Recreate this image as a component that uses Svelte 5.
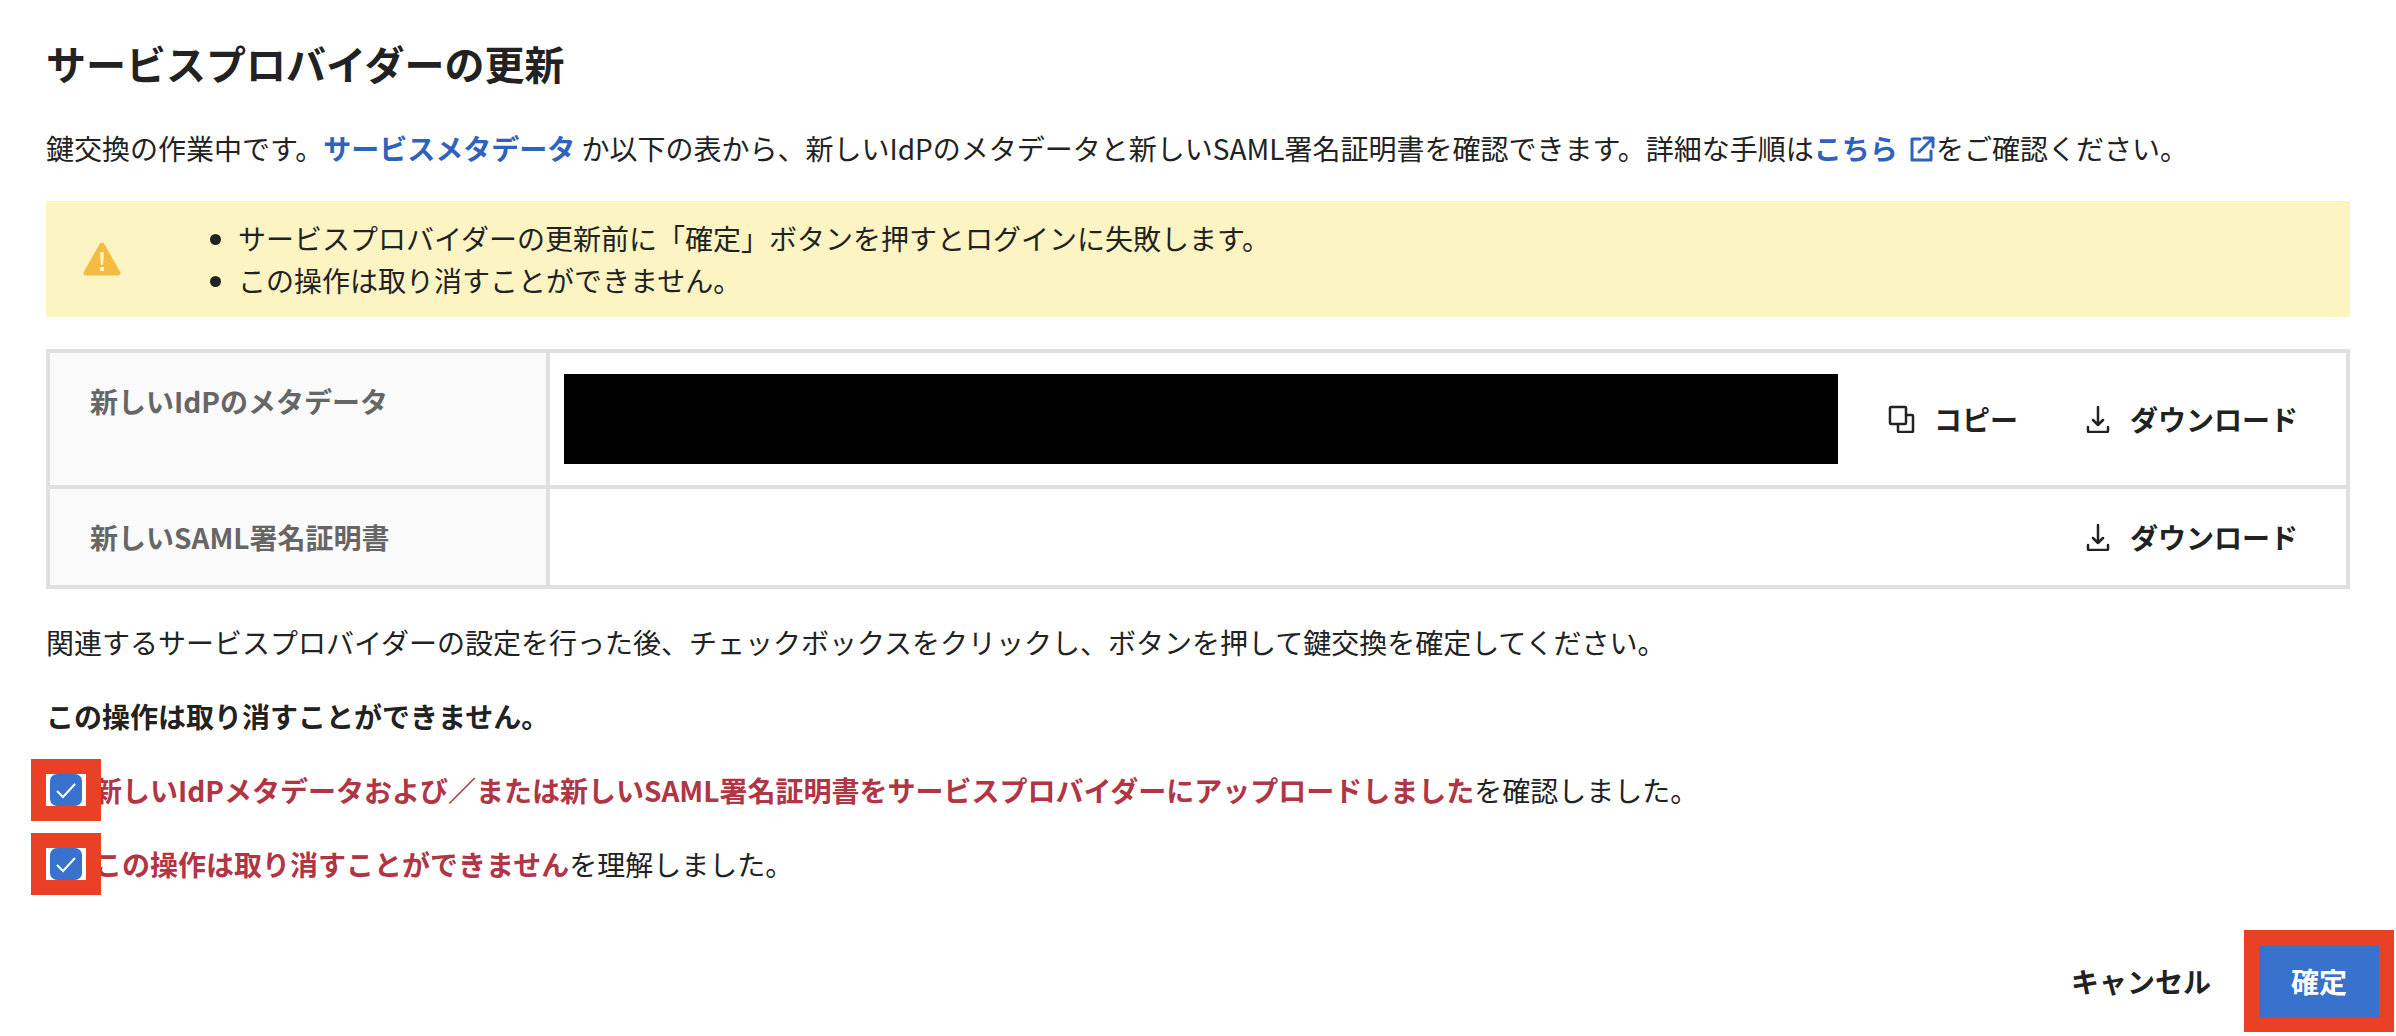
<script>
	let uploaded = true;
	let understood = true;
</script>

<svelte:head>
	<title>サービスプロバイダーの更新</title>
</svelte:head>

<main class="dialog">
	<div class="content">
		<h1>サービスプロバイダーの更新</h1>

		<p>
			鍵交換の作業中です。<a href="#metadata">サービスメタデータ</a> か以下の表から、新しいIdPのメタデータと新しいSAML署名証明書を確認できます。詳細な手順は<a href="#guide">こちら
				<svg class="external" viewBox="0 0 28 28" aria-hidden="true">
					<path d="M12 4H4v21h19v-9M16 3h9v9M24 4 11 17" />
				</svg></a>をご確認ください。
		</p>

		<div class="alert">
			<svg class="warning" viewBox="0 0 40 36" aria-hidden="true">
				<path class="triangle" d="M20 4 36 32H4Z" />
				<path class="mark" d="M18 11h4l-1 13h-2zM18 26h4v4h-4z" />
			</svg>
			<ul>
				<li>サービスプロバイダーの更新前に「確定」ボタンを押すとログインに失敗します。</li>
				<li>この操作は取り消すことができません。</li>
			</ul>
		</div>

		<table>
			<tbody>
				<tr>
					<th scope="row">新しいIdPのメタデータ</th>
					<td>
						<div class="cell">
							<div class="redacted"></div>
							<button type="button" class="action">
								<svg viewBox="0 0 28 28" aria-hidden="true">
									<rect x="2" y="2" width="16" height="17" rx="1" />
									<path d="M18 10h6q1 0 1 1v15q0 1-1 1H11q-1 0-1-1v-7" />
								</svg>
								コピー
							</button>
							<button type="button" class="action">
								<svg viewBox="0 0 28 28" aria-hidden="true">
									<path d="M14 2v18M9 15l5 5 5-5M4 22v4q0 1 1 1h18q1 0 1-1v-4" />
								</svg>
								ダウンロード
							</button>
						</div>
					</td>
				</tr>
				<tr>
					<th scope="row">新しいSAML署名証明書</th>
					<td>
						<div class="cell">
							<button type="button" class="action">
								<svg viewBox="0 0 28 28" aria-hidden="true">
									<path d="M14 2v18M9 15l5 5 5-5M4 22v4q0 1 1 1h18q1 0 1-1v-4" />
								</svg>
								ダウンロード
							</button>
						</div>
					</td>
				</tr>
			</tbody>
		</table>

		<p>関連するサービスプロバイダーの設定を行った後、チェックボックスをクリックし、ボタンを押して鍵交換を確定してください。</p>
		<p><strong>この操作は取り消すことができません。</strong></p>

		<label>
			<span class="check highlight">
				<input type="checkbox" bind:checked={uploaded} />
			</span>
			<span><strong class="danger">新しいIdPメタデータおよび／または新しいSAML署名証明書をサービスプロバイダーにアップロードしました</strong>を確認しました。</span>
		</label>
		<label>
			<span class="check highlight">
				<input type="checkbox" bind:checked={understood} />
			</span>
			<span><strong class="danger">この操作は取り消すことができません</strong>を理解しました。</span>
		</label>
	</div>

	<footer>
		<button type="button" class="cancel">キャンセル</button>
		<button type="button" class="confirm highlight" disabled={!uploaded || !understood}>確定</button>
	</footer>
</main>

<style>
	:global(body) {
		background: #fff;
	}
	.dialog {
		font-family: "Noto Sans CJK JP", sans-serif;
		font-size: 28px;
		line-height: 42px;
		color: #222;
	}
	.content {
		display: flex;
		flex-direction: column;
		gap: 32px;
		padding: 31px 46px 0;
	}
	h1 {
		margin: 0;
		font-size: 40px;
		font-weight: 700;
		line-height: 64px;
	}
	p {
		margin: 0;
	}
	a {
		color: #2e62bd;
		font-weight: 700;
		text-decoration: none;
	}
	strong {
		font-weight: 700;
	}
	svg {
		fill: none;
		stroke: currentColor;
		stroke-width: 2.5;
		stroke-linecap: round;
		stroke-linejoin: round;
	}
	.external {
		width: 28px;
		height: 28px;
		margin-left: 4px;
		vertical-align: -3px;
		stroke-width: 3;
	}

	.alert {
		display: flex;
		align-items: center;
		padding: 16px 36px;
		background: #fdf4c4;
	}
	.warning {
		width: 40px;
		height: 36px;
	}
	.triangle {
		fill: #f5bc42;
		stroke: #f5bc42;
		stroke-width: 5;
	}
	.mark {
		fill: #fdf4c4;
		stroke: none;
	}
	ul {
		margin: 0;
		padding-left: 116px;
	}

	table {
		width: 100%;
		border-collapse: collapse;
	}
	th,
	td {
		border: 4px solid #e0e0e0;
	}
	th {
		width: 500px;
		box-sizing: border-box;
		padding: 27px 40px;
		background: #fafafa;
		color: #666;
		font-weight: 700;
		text-align: left;
		vertical-align: top;
	}
	td {
		padding: 0 12px 0 14px;
	}
	.cell {
		display: flex;
		align-items: center;
		justify-content: flex-end;
	}
	.redacted {
		flex: 1;
		height: 90px;
		margin: 21px 20px 21px 0;
		background: #000;
	}
	button {
		border: 0;
		background: none;
		color: inherit;
		font: inherit;
		font-weight: 700;
		cursor: pointer;
	}
	.action {
		display: flex;
		align-items: center;
		gap: 18px;
		padding: 15px 36px 15px 30px;
	}
	.action svg {
		width: 28px;
		height: 28px;
	}

	label {
		display: flex;
		align-items: center;
		gap: 8px;
	}
	.check {
		position: relative;
		display: flex;
		justify-content: center;
		width: 40px;
		background: #fff;
	}
	.highlight {
		outline: 15px solid #ea4025;
	}
	input {
		appearance: none;
		width: 32px;
		height: 32px;
		margin: 0;
		border-radius: 7px;
	}
	input:checked {
		background: #3872cc url("data:image/svg+xml,%3Csvg xmlns='http://www.w3.org/2000/svg' viewBox='0 0 32 32'%3E%3Cpath d='M7 17l6 6L25 10' fill='none' stroke='white' stroke-width='2'/%3E%3C/svg%3E");
	}
	.danger {
		color: #b03545;
	}

	footer {
		display: flex;
		justify-content: flex-end;
		gap: 12px;
		padding: 60px 17px 20px;
	}
	.cancel {
		padding: 15px 36px;
	}
	.confirm {
		padding: 15px 32px;
		background: #3872cc;
		color: #fff;
	}
</style>
